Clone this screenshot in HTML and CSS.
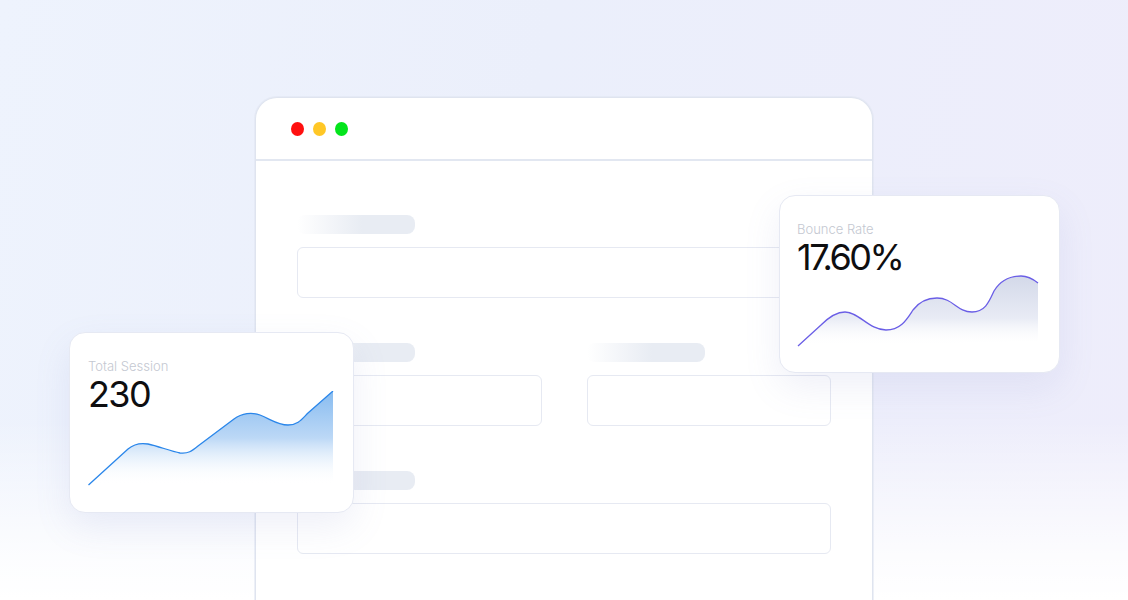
FILE: index.html
```html
<!DOCTYPE html>
<html lang="en">
<head>
<meta charset="utf-8">
<title>Analytics form mockup</title>
<link rel="stylesheet" href="styles.css">
</head>
<body>
<div class="scene">
  <div class="browser">
    <div class="titlebar">
      <span class="dot dot-red"></span>
      <span class="dot dot-yellow"></span>
      <span class="dot dot-green"></span>
    </div>
    <div class="form">
      <div class="field">
        <div class="label-skel"></div>
        <div class="input-skel"></div>
      </div>
      <div class="row">
        <div class="field">
          <div class="label-skel"></div>
          <div class="input-skel"></div>
        </div>
        <div class="field">
          <div class="label-skel"></div>
          <div class="input-skel"></div>
        </div>
      </div>
      <div class="field">
        <div class="label-skel"></div>
        <div class="input-skel"></div>
      </div>
    </div>
  </div>

  <div class="card card-session">
    <div class="card-label">Total Session</div>
    <div class="card-value">230</div>
    <svg class="chart chart-session" width="246" height="96" viewBox="0 0 246 96">
      <defs>
        <linearGradient id="gBlue" x1="0" y1="0" x2="0" y2="1">
          <stop offset="0" stop-color="#88bcf0"/>
          <stop offset="0.5" stop-color="#bcd8f6"/>
          <stop offset="1" stop-color="#ffffff" stop-opacity="0"/>
        </linearGradient>
      </defs>
      <path d="M0.5,94 L40,58 C47,52 54,52 60,53 C70,55 82,60 92,62 C100,63 104,60 110,55 L146,28 C154,22 164,21 172,24 C184,29 190,34 200,34 C210,34 214,28 220,22 L245,0 L245,92 L0.5,94 Z" fill="url(#gBlue)"/>
      <path d="M0.5,94 L40,58 C47,52 54,52 60,53 C70,55 82,60 92,62 C100,63 104,60 110,55 L146,28 C154,22 164,21 172,24 C184,29 190,34 200,34 C210,34 214,28 220,22 L245,0" fill="none" stroke="#2a86ea" stroke-width="1.3"/>
    </svg>
  </div>

  <div class="card card-bounce">
    <div class="card-label">Bounce Rate</div>
    <div class="card-value">17.60%</div>
    <svg class="chart chart-bounce" width="242" height="74" viewBox="0 0 242 74">
      <defs>
        <linearGradient id="gGrey" x1="0" y1="0" x2="0" y2="1">
          <stop offset="0" stop-color="#d3d9e9"/>
          <stop offset="0.6" stop-color="#e8ebf5"/>
          <stop offset="1" stop-color="#ffffff" stop-opacity="0"/>
        </linearGradient>
      </defs>
      <path d="M1,71 L24,50 C32,42 40,37 48,37 C62,37 72,55 89,55 C104,55 110,44 116,35 C122,27 131,23 140,23 C156,23 160,37 175,37 C188,37 192,27 197,16 C203,6 213,1 224,1 C231,1 236,4 241,8 L241,66 L1,71 Z" fill="url(#gGrey)"/>
      <path d="M1,71 L24,50 C32,42 40,37 48,37 C62,37 72,55 89,55 C104,55 110,44 116,35 C122,27 131,23 140,23 C156,23 160,37 175,37 C188,37 192,27 197,16 C203,6 213,1 224,1 C231,1 236,4 241,8" fill="none" stroke="#6a5ee6" stroke-width="1.3"/>
    </svg>
  </div>
</div>
</body>
</html>
```

FILE: styles.css
```css
* {
  box-sizing: border-box;
}

html, body {
  margin: 0;
  padding: 0;
}

body {
  width: 1128px;
  height: 600px;
  overflow: hidden;
  font-family: "Inter", "Noto Sans", sans-serif;
  background: #ffffff;
}

.scene {
  position: relative;
  width: 1128px;
  height: 600px;
  overflow: hidden;
  padding-top: 97px;
  display: flex;
  justify-content: center;
  background:
    linear-gradient(to bottom, rgba(255,255,255,0) 0%, rgba(255,255,255,0) 70%, rgba(255,255,255,0.85) 93%, #ffffff 100%),
    linear-gradient(100deg, #eef3fd 0%, #ebeffb 45%, #eeedfb 100%);
}

.browser {
  width: 618px;
  height: 560px;
  flex: none;
  background: #ffffff;
  border: 1px solid #dfe4ef;
  border-bottom: none;
  border-radius: 22px 22px 0 0;
  box-shadow: 0 0 0 1px rgba(225, 230, 242, 0.6);
}

.titlebar {
  height: 63px;
  border-bottom: 2px solid #e2e7f1;
  display: flex;
  align-items: center;
  gap: 9px;
  padding-left: 35px;
}

.dot {
  width: 13px;
  height: 14px;
  border-radius: 50%;
}

.dot-red { background: #ff1010; }
.dot-yellow { background: #ffc726; }
.dot-green { background: #04e41c; }

.form {
  padding: 54px 41px 0;
  display: flex;
  flex-direction: column;
  gap: 45px;
}

.row {
  display: grid;
  grid-template-columns: 1fr 1fr;
  gap: 45px;
}

.field {
  display: flex;
  flex-direction: column;
}

.label-skel {
  width: 118px;
  height: 19px;
  border-radius: 8px;
  margin-bottom: 13px;
  background: linear-gradient(90deg, rgba(232, 236, 243, 0) 0%, #e8ecf3 55%, #e8ecf3 100%);
}

.input-skel {
  height: 51px;
  border: 1px solid #e6e9f2;
  border-radius: 6px;
  background: #ffffff;
}

.card {
  position: absolute;
  background: #ffffff;
  border: 1px solid #e6e9f3;
  border-radius: 16px;
  box-shadow: 0 14px 36px rgba(120, 135, 200, 0.12);
  display: flex;
  flex-direction: column;
}

.card-session {
  left: 69px;
  top: 332px;
  width: 285px;
  height: 181px;
  padding: 25px 0 0 18px;
}

.card-bounce {
  left: 779px;
  top: 195px;
  width: 281px;
  height: 178px;
  padding: 25px 0 0 17px;
}

.card-label {
  font-size: 13px;
  line-height: 16px;
  font-weight: 300;
  color: #c4c8d1;
}

.card-value {
  font-size: 36px;
  line-height: 40px;
  font-weight: 400;
  color: #0e0e10;
  letter-spacing: -1.6px;
}

.card-bounce .card-value {
  letter-spacing: -2.5px;
}

.chart {
  display: block;
}

.chart-session {
  margin-top: -23px;
}

.chart-bounce {
  margin-top: -2px;
}
```
